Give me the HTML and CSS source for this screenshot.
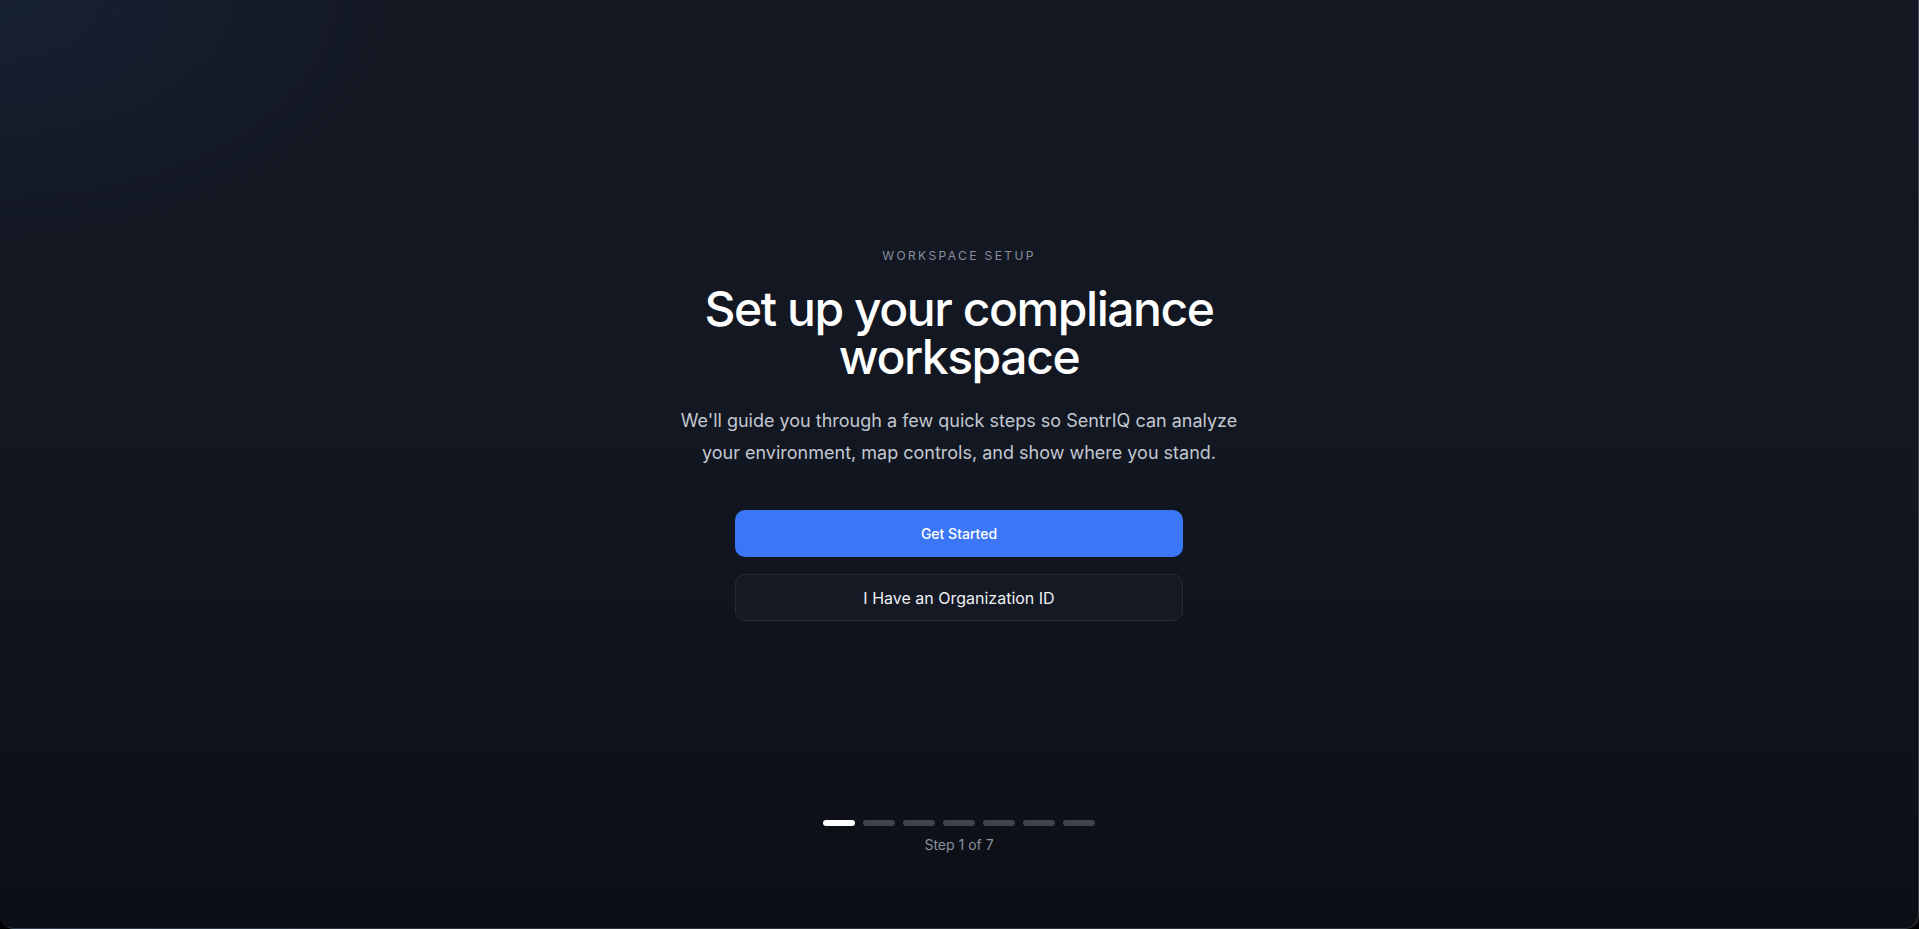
FILE: index.html
```html
<!DOCTYPE html>
<html lang="en">
<head>
  <meta charset="UTF-8">
  <meta name="viewport" content="width=device-width, initial-scale=1">
  <title>SentrIQ - Workspace Setup</title>
  <link rel="stylesheet" href="styles.css">
</head>
<body>
  <div class="window">
    <main class="onboarding">
      <p class="eyebrow">Workspace Setup</p>
      <h1>Set up your compliance workspace</h1>
      <p class="lead">We'll guide you through a few quick steps so SentrIQ can analyze your environment, map controls, and show where you stand.</p>
      <div class="actions">
        <button class="btn-primary">Get Started</button>
        <button class="btn-secondary">I Have an Organization ID</button>
      </div>
    </main>

    <footer class="progress">
      <div class="steps">
        <span class="step active"></span>
        <span class="step"></span>
        <span class="step"></span>
        <span class="step"></span>
        <span class="step"></span>
        <span class="step"></span>
        <span class="step"></span>
      </div>
      <p class="step-label">Step 1 of 7</p>
    </footer>
  </div>
</body>
</html>
```

FILE: styles.css
```css
html, body {
  margin: 0;
  padding: 0;
  height: 100%;
}
body {
  background: #000;
  font-family: Inter, 'Noto Sans', sans-serif;
  color: #fff;
}
.window {
  box-sizing: border-box;
  height: 929px;
  display: flex;
  flex-direction: column;
  border-right: 1px solid rgba(255,255,255,0.18);
  border-bottom: 1px solid rgba(255,255,255,0.12);
  border-radius: 0 0 14px 14px;
  overflow: hidden;
  background:
    radial-gradient(ellipse 520px 320px at 0 0, rgba(26,42,66,0.5), rgba(26,42,66,0) 75%),
    linear-gradient(180deg, #131823 0%, #121722 45%, #0c0f15 100%);
}
.onboarding {
  display: flex;
  flex-direction: column;
  align-items: center;
  text-align: center;
  padding-top: 248px;
}
.eyebrow {
  margin: 0 0 21px;
  font-size: 12px;
  line-height: 16px;
  letter-spacing: 0.2em;
  text-transform: uppercase;
  color: #8a919e;
}
h1 {
  margin: 0;
  max-width: 560px;
  font-size: 48px;
  line-height: 48px;
  font-weight: 500;
  letter-spacing: -0.03em;
  color: #fff;
}
.lead {
  margin: 24px 0 0;
  max-width: 576px;
  font-size: 18px;
  line-height: 32px;
  color: #c3c8d1;
}
.actions {
  display: flex;
  flex-direction: column;
  gap: 17px;
  width: 448px;
  margin-top: 41px;
}
.actions button {
  width: 100%;
  box-sizing: border-box;
  font-family: inherit;
  cursor: pointer;
  border-radius: 10px;
}
.btn-primary {
  height: 47px;
  border: none;
  background: #3b76f7;
  color: #fff;
  font-size: 14px;
  font-weight: 500;
}
.btn-primary:hover {
  background: #316ae6;
}
.btn-secondary {
  height: 47px;
  border: 1px solid #262c37;
  background: #141923;
  color: #eef0f3;
  font-size: 16px;
}
.progress {
  margin-top: auto;
  padding-bottom: 73px;
  display: flex;
  flex-direction: column;
  align-items: center;
}
.steps {
  display: flex;
  gap: 8px;
}
.step {
  width: 32px;
  height: 6px;
  border-radius: 3px;
  background: #3d4450;
}
.step.active {
  background: #fff;
}
.step-label {
  margin: 9px 0 0;
  font-size: 14px;
  line-height: 20px;
  color: #8a919e;
}
```
